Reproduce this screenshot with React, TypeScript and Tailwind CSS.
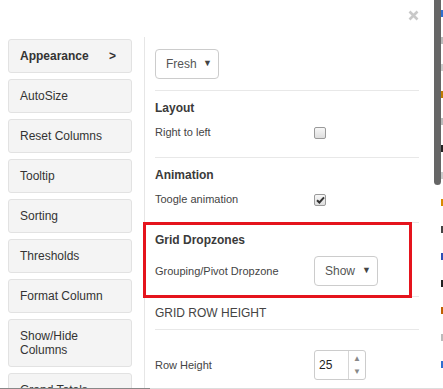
import React from 'react';

const menuItems = [
    { label: 'Appearance', active: true },
    { label: 'AutoSize' },
    { label: 'Reset Columns' },
    { label: 'Tooltip' },
    { label: 'Sorting' },
    { label: 'Thresholds' },
    { label: 'Format Column' },
    { label: 'Show/Hide Columns' },
    { label: 'Grand Totals' },
];

function Checkbox({ checked }: { checked?: boolean }) {
    return (
        <span className="w-[12px] h-[12px] rounded-[2px] border border-[#9a9a9a] bg-gradient-to-b from-[#f7f7f7] to-[#dedede] flex items-center justify-center">
            {checked && (
                <svg width="9" height="8" viewBox="0 0 9 8">
                    <path d="M1 4.2 L3.4 6.5 L8 1.3" fill="none" stroke="#333" strokeWidth="2" />
                </svg>
            )}
        </span>
    );
}

function Select({ value }: { value: string }) {
    return (
        <div className="w-[64px] h-[30px] border border-[#cccccc] rounded-[4px] bg-white flex items-center justify-between pl-[10px] pr-[6px] text-[12px] text-[#555]">
            <span>{value}</span>
            <span className="text-[9px] text-[#444]">▼</span>
        </div>
    );
}

function SectionHeading({ children }: { children: React.ReactNode }) {
    return <div className="text-[12px] leading-[14px] font-bold text-[#3a3a3a]">{children}</div>;
}

export default function App() {
    return (
        <div className="w-[443px] h-[389px] relative overflow-hidden bg-white flex font-['Liberation_Sans',Arial,sans-serif]">
            {/* modal */}
            <div className="w-[432px] shrink-0 relative">
                <button className="absolute left-[408px] top-[10px]">
                    <svg width="11" height="11" viewBox="0 0 11 11">
                        <path d="M1.5 1.5 L9.5 9.5 M9.5 1.5 L1.5 9.5" stroke="#c9c9c9" strokeWidth="2.6" />
                    </svg>
                </button>

                <div className="flex pt-[37px] h-full">
                    {/* left menu */}
                    <div className="w-[145px] shrink-0 border-r border-[#e6e6e6] pl-[8px] pt-[2px] flex flex-col gap-[6px]">
                        {menuItems.map(item => (
                            <div
                                key={item.label}
                                className={`w-[124px] shrink-0 border border-[#e2e2e2] bg-[#f4f4f4] rounded-[3px] pl-[11px] pr-[15px] py-[9px] text-[12px] leading-[14px] text-[#333] flex justify-between ${item.active ? 'font-bold' : ''}`}
                            >
                                <span>{item.label}</span>
                                {item.active && <span>&gt;</span>}
                            </div>
                        ))}
                    </div>

                    {/* settings */}
                    <div className="pl-[10px] pt-[12px]">
                        <div className="w-[264px]">
                            <div className="border-b border-[#e8e8e8] pb-[11px]">
                                <Select value="Fresh" />
                            </div>

                            <div className="border-b border-[#e8e8e8] pt-[10px] pb-[14px]">
                                <SectionHeading>Layout</SectionHeading>
                                <div className="mt-[7px] h-[21px] flex items-center">
                                    <span className="w-[159px] text-[11px] text-[#444]">Right to left</span>
                                    <Checkbox />
                                </div>
                            </div>

                            <div className="border-b border-[#e8e8e8] pt-[10px] pb-[12px]">
                                <SectionHeading>Animation</SectionHeading>
                                <div className="mt-[7px] h-[21px] flex items-center">
                                    <span className="w-[159px] text-[11px] text-[#444]">Toogle animation</span>
                                    <Checkbox checked />
                                </div>
                            </div>

                            <div className="border-b border-[#e8e8e8] pt-[10px] pb-[10px]">
                                <SectionHeading>Grid Dropzones</SectionHeading>
                                <div className="mt-[9px] h-[30px] flex items-center">
                                    <span className="w-[159px] text-[11px] text-[#444]">Grouping/Pivot Dropzone</span>
                                    <Select value="Show" />
                                </div>
                            </div>

                            <div className="border-b border-[#e8e8e8] py-[9px] text-[12px] leading-[14px] text-[#444]">
                                GRID ROW HEIGHT
                            </div>

                            <div className="pt-[20px] h-[30px] flex items-center box-content">
                                <span className="w-[159px] text-[11px] text-[#444]">Row Height</span>
                                <div className="w-[52px] h-[30px] border border-[#cccccc] rounded-[3px] flex">
                                    <span className="w-[34px] border-r border-[#d6d6d6] pl-[4px] text-[12px] text-[#222] flex items-center">25</span>
                                    <div className="flex-1 flex flex-col items-center justify-center gap-[5px] text-[8px] leading-[8px] text-[#888]">
                                        <span>▲</span>
                                        <span>▼</span>
                                    </div>
                                </div>
                            </div>
                        </div>
                    </div>
                </div>

                {/* highlight */}
                <div className="absolute left-[143px] top-[222px] w-[269px] h-[76px] border-[3px] border-[#e5141d]" />
            </div>

            {/* page scrollbar behind the modal */}
            <div className="w-[11px] flex pl-[2px]">
                <div className="w-[7px]">
                    <div className="h-[185px] bg-[#666666] rounded-b-[4px]" />
                </div>
                <div className="w-[2px] flex flex-col gap-[20px] pt-[10px]">
                    {['#2e6fd1', '#bbb', '#ccc', '#c07a00', '#bbb', '#222', '#ccc', '#d88a00', '#444', '#2d4fb5', '#222', '#c06000', '#bbb', '#2e6fd1'].map((c, i) => (
                        <span key={i} className="h-[7px]" style={{ backgroundColor: c }} />
                    ))}
                </div>
            </div>

            <div className="absolute left-0 bottom-0 w-[443px] h-[1px] flex">
                <div className="w-[150px] bg-[#888]" />
                <div className="flex-1 bg-[#dddddd]" />
            </div>
        </div>
    );
}
